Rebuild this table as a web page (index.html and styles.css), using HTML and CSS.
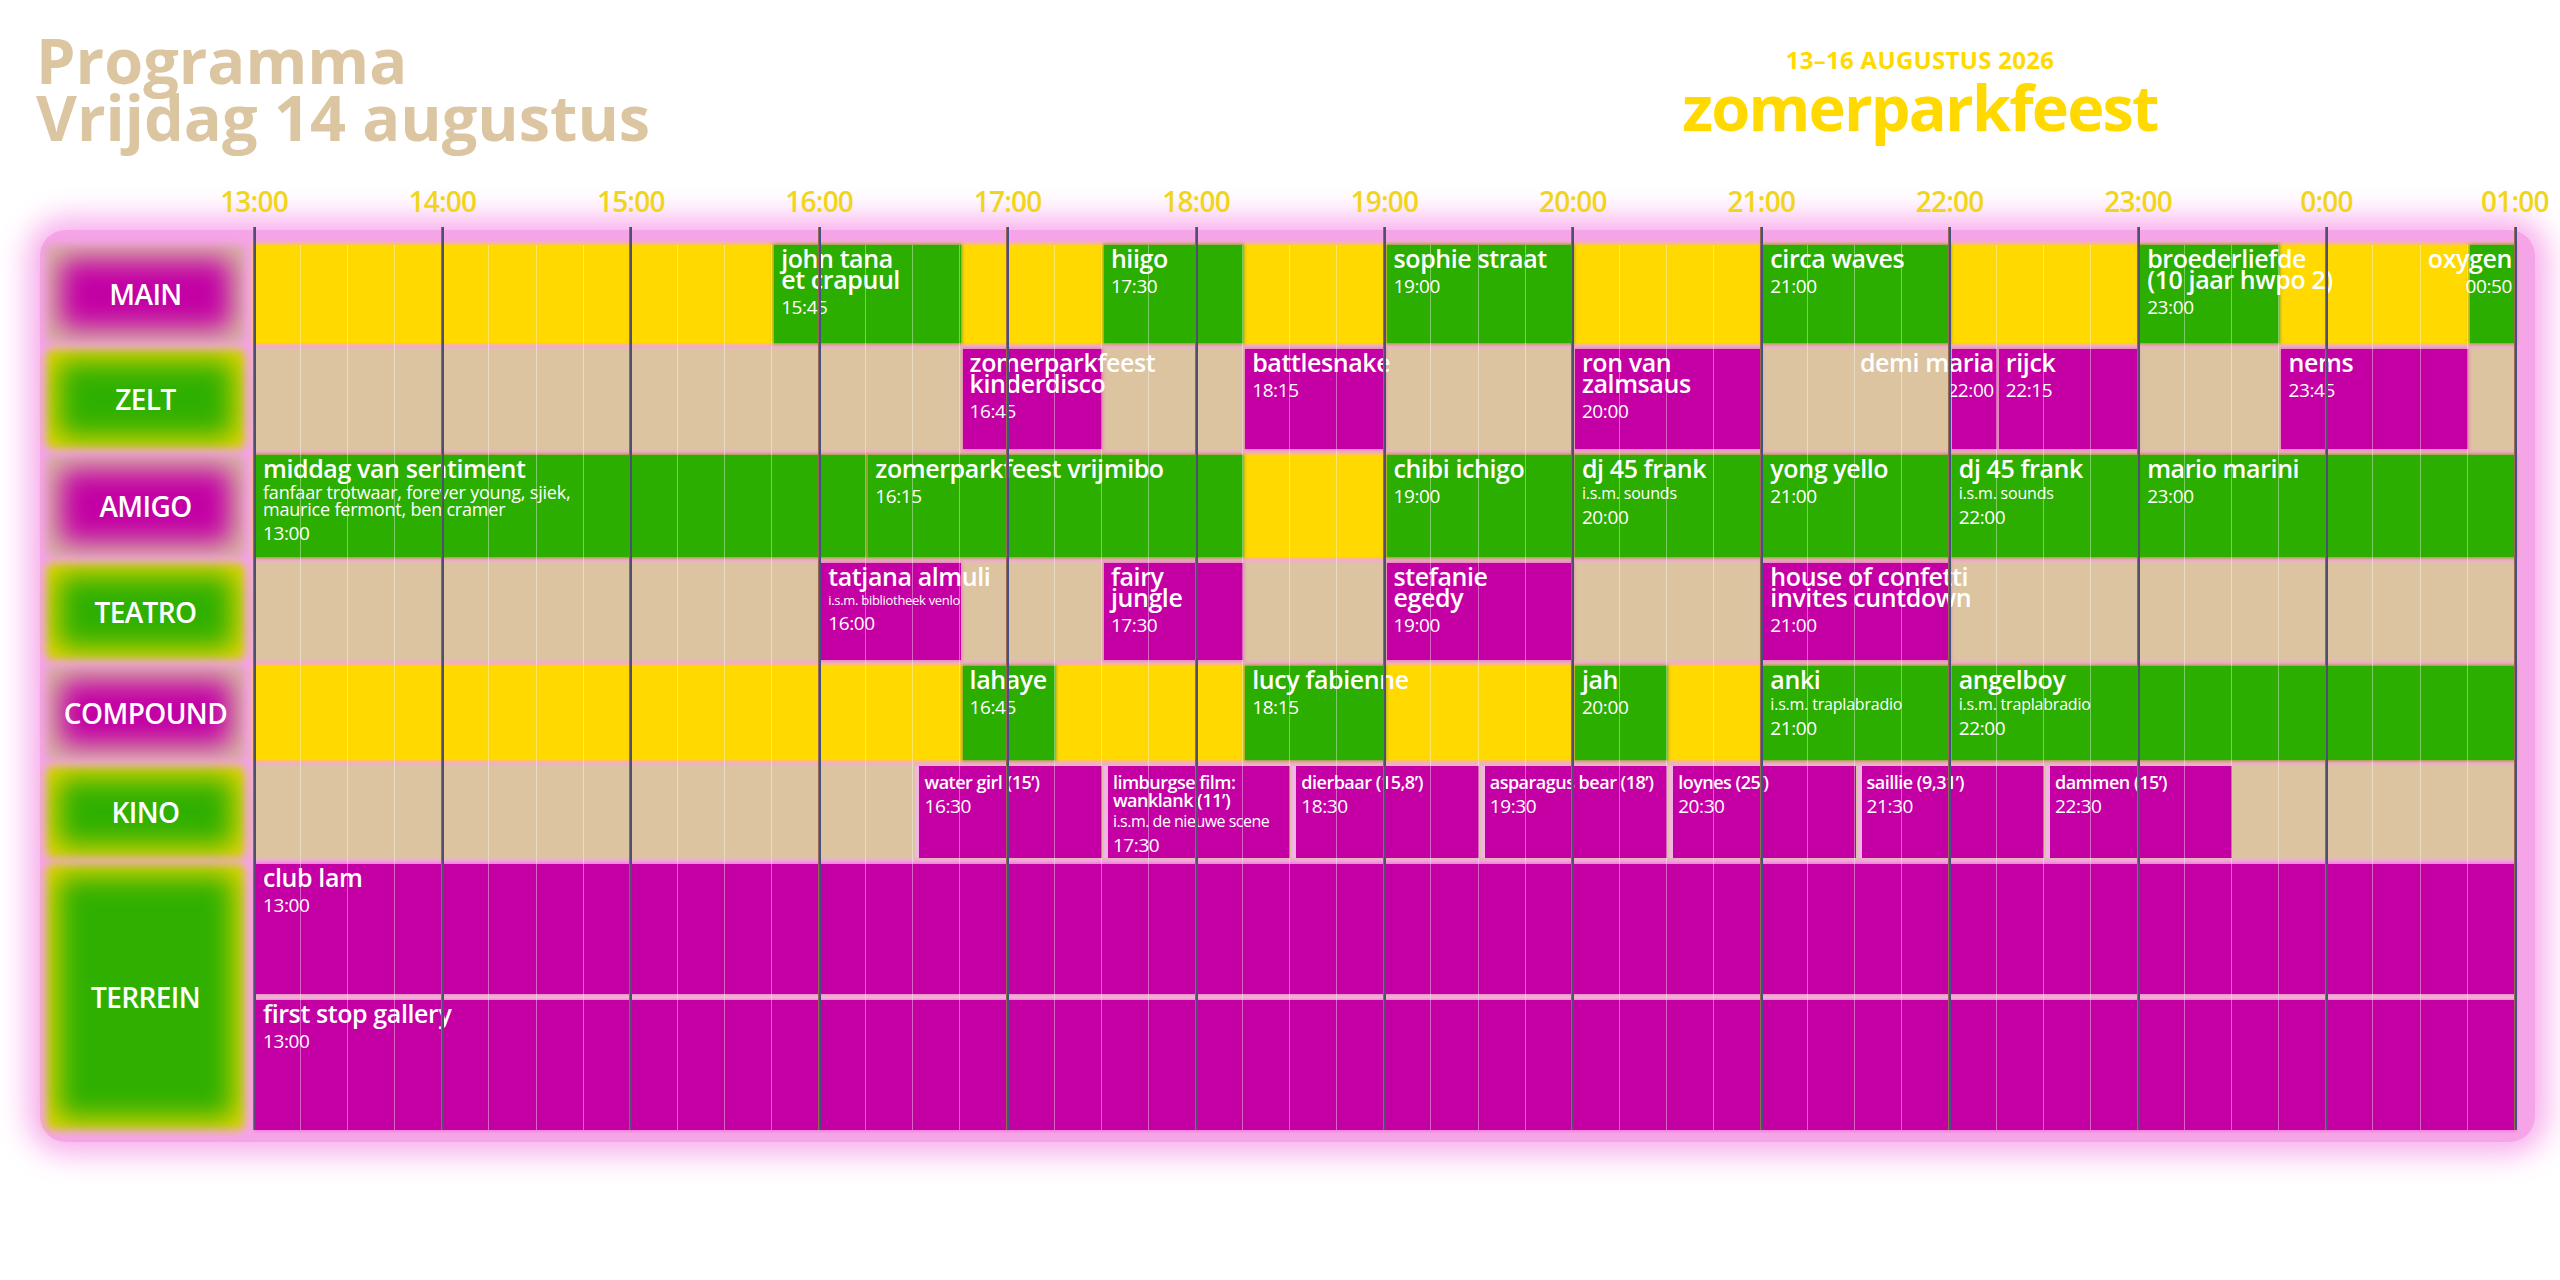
FILE: index.html
```html
<!DOCTYPE html>
<html lang="nl">
<head>
<meta charset="utf-8">
<title>Programma Vrijdag 14 augustus – zomerparkfeest</title>
<link rel="stylesheet" href="styles.css">
</head>
<body>
<div class="page">
  <header class="top">
    <h1 class="title">Programma<br>Vrijdag 14 augustus</h1>
    <div class="brand">
      <div class="dates">13–16 AUGUSTUS 2026</div>
      <div class="logo">zomerparkfeest</div>
    </div>
  </header>

  <div class="axis">
    <span>13:00</span><span>14:00</span><span>15:00</span><span>16:00</span><span>17:00</span><span>18:00</span><span>19:00</span><span>20:00</span><span>21:00</span><span>22:00</span><span>23:00</span><span>0:00</span><span>01:00</span>
  </div>

  <div class="board">
    <div class="rows">
      <div class="lines">
        <div class="hour"></div><div class="hour"></div><div class="hour"></div><div class="hour"></div>
        <div class="hour"></div><div class="hour"></div><div class="hour"></div><div class="hour"></div>
        <div class="hour"></div><div class="hour"></div><div class="hour"></div><div class="hour"></div>
      </div>

      <div class="row r-main">
        <div class="stage mag"><span>MAIN</span></div>
        <div class="track yellow">
          <div class="ev g" style="grid-column:12 / span 4"><div class="t">john tana<br>et crapuul</div><div class="time">15:45</div></div>
          <div class="ev g" style="grid-column:19 / span 3"><div class="t">hiigo</div><div class="time">17:30</div></div>
          <div class="ev g" style="grid-column:25 / span 4"><div class="t">sophie straat</div><div class="time">19:00</div></div>
          <div class="ev g" style="grid-column:33 / span 4"><div class="t">circa waves</div><div class="time">21:00</div></div>
          <div class="ev g" style="grid-column:41 / span 3"><div class="t">broederliefde<br>(10 jaar hwpo 2)</div><div class="time">23:00</div></div>
          <div class="ev g right" style="grid-column:48 / span 1"><div class="t">oxygen</div><div class="time">00:50</div></div>
        </div>
      </div>

      <div class="row r-zelt">
        <div class="stage grn"><span>ZELT</span></div>
        <div class="track beige">
          <div class="ev m" style="grid-column:16 / span 3"><div class="t">zomerparkfeest<br>kinderdisco</div><div class="time">16:45</div></div>
          <div class="ev m" style="grid-column:22 / span 3"><div class="t">battlesnake</div><div class="time">18:15</div></div>
          <div class="ev m" style="grid-column:29 / span 4"><div class="t">ron van<br>zalmsaus</div><div class="time">20:00</div></div>
          <div class="ev m right" style="grid-column:37 / span 1"><div class="t">demi maria</div><div class="time">22:00</div></div>
          <div class="ev m" style="grid-column:38 / span 3"><div class="t">rijck</div><div class="time">22:15</div></div>
          <div class="ev m" style="grid-column:44 / span 4"><div class="t">nems</div><div class="time">23:45</div></div>
        </div>
      </div>

      <div class="row r-amigo">
        <div class="stage mag"><span>AMIGO</span></div>
        <div class="track yellow">
          <div class="ev g" style="grid-column:1 / span 13"><div class="t">middag van sentiment</div><div class="sub big">fanfaar trotwaar, forever young, sjiek,<br>maurice fermont, ben cramer</div><div class="time">13:00</div></div>
          <div class="ev g" style="grid-column:14 / span 8"><div class="t">zomerparkfeest vrijmibo</div><div class="time">16:15</div></div>
          <div class="ev g" style="grid-column:25 / span 4"><div class="t">chibi ichigo</div><div class="time">19:00</div></div>
          <div class="ev g" style="grid-column:29 / span 4"><div class="t">dj 45 frank</div><div class="sub">i.s.m. sounds</div><div class="time">20:00</div></div>
          <div class="ev g" style="grid-column:33 / span 4"><div class="t">yong yello</div><div class="time">21:00</div></div>
          <div class="ev g" style="grid-column:37 / span 4"><div class="t">dj 45 frank</div><div class="sub">i.s.m. sounds</div><div class="time">22:00</div></div>
          <div class="ev g" style="grid-column:41 / span 8"><div class="t">mario marini</div><div class="time">23:00</div></div>
        </div>
      </div>

      <div class="row r-teatro">
        <div class="stage grn"><span>TEATRO</span></div>
        <div class="track beige">
          <div class="ev m" style="grid-column:13 / span 3"><div class="t">tatjana almuli</div><div class="sub small">i.s.m. bibliotheek venlo</div><div class="time">16:00</div></div>
          <div class="ev m" style="grid-column:19 / span 3"><div class="t">fairy<br>jungle</div><div class="time">17:30</div></div>
          <div class="ev m" style="grid-column:25 / span 4"><div class="t">stefanie<br>egedy</div><div class="time">19:00</div></div>
          <div class="ev m" style="grid-column:33 / span 4"><div class="t">house of confetti<br>invites cuntdown</div><div class="time">21:00</div></div>
        </div>
      </div>

      <div class="row r-compound">
        <div class="stage mag"><span>COMPOUND</span></div>
        <div class="track yellow">
          <div class="ev g" style="grid-column:16 / span 2"><div class="t">lahaye</div><div class="time">16:45</div></div>
          <div class="ev g" style="grid-column:22 / span 3"><div class="t">lucy fabienne</div><div class="time">18:15</div></div>
          <div class="ev g" style="grid-column:29 / span 2"><div class="t">jah</div><div class="time">20:00</div></div>
          <div class="ev g" style="grid-column:33 / span 4"><div class="t">anki</div><div class="sub">i.s.m. traplabradio</div><div class="time">21:00</div></div>
          <div class="ev g" style="grid-column:37 / span 12"><div class="t">angelboy</div><div class="sub">i.s.m. traplabradio</div><div class="time">22:00</div></div>
        </div>
      </div>

      <div class="row r-kino">
        <div class="stage grn"><span>KINO</span></div>
        <div class="track beige">
          <div class="ev m kino" style="grid-column:15 / span 4"><div class="t">water girl (15’)</div><div class="time">16:30</div></div>
          <div class="ev m kino" style="grid-column:19 / span 4"><div class="t">limburgse film:<br>wanklank (11’)</div><div class="sub">i.s.m. de nieuwe scene</div><div class="time">17:30</div></div>
          <div class="ev m kino" style="grid-column:23 / span 4"><div class="t">dierbaar (15,8’)</div><div class="time">18:30</div></div>
          <div class="ev m kino" style="grid-column:27 / span 4"><div class="t">asparagus bear (18’)</div><div class="time">19:30</div></div>
          <div class="ev m kino" style="grid-column:31 / span 4"><div class="t">loynes (25’)</div><div class="time">20:30</div></div>
          <div class="ev m kino" style="grid-column:35 / span 4"><div class="t">saillie (9,31’)</div><div class="time">21:30</div></div>
          <div class="ev m kino" style="grid-column:39 / span 4"><div class="t">dammen (15’)</div><div class="time">22:30</div></div>
        </div>
      </div>

      <div class="row r-terrein">
        <div class="stage grn"><span>TERREIN</span></div>
        <div class="track split">
          <div class="ev m" style="grid-column:1 / span 48; grid-row:1"><div class="t">club lam</div><div class="time">13:00</div></div>
          <div class="ev m" style="grid-column:1 / span 48; grid-row:2"><div class="t">first stop gallery</div><div class="time">13:00</div></div>
        </div>
      </div>
    </div>
  </div>
</div>
</body>
</html>
```

FILE: styles.css
```css
* { box-sizing: border-box; }

html, body {
  margin: 0;
  padding: 0;
  background: #ffffff;
}

body {
  font-family: "Open Sans", "Liberation Sans", sans-serif;
  color: #ffffff;
}

.page {
  width: 2560px;
  height: 1280px;
  overflow: hidden;
  position: relative;
}

/* ---------- header ---------- */
.top {
  height: 181px;
  display: flex;
  align-items: flex-start;
}

.title {
  margin: 0;
  width: 1280px;
  padding: 31px 0 0 36px;
  font-family: "Open Sans", "Liberation Sans", sans-serif;
  font-weight: 700;
  font-size: 63px;
  line-height: 57px;
  letter-spacing: 0;
  color: #dcc6a2;
}

.brand {
  width: 1280px;
  display: flex;
  flex-direction: column;
  align-items: center;
  padding-top: 46px;
  color: #ffd900;
}

.dates {
  font-weight: 700;
  font-size: 24px;
  line-height: 28px;
  letter-spacing: 0.3px;
}

.logo {
  font-weight: 700;
  font-size: 63px;
  line-height: 62px;
  letter-spacing: -1.8px;
  margin-top: 2px;
}

/* ---------- time axis ---------- */
.axis {
  height: 40px;
  margin-left: 159.8px;
  display: grid;
  grid-template-columns: repeat(13, 188.42px);
  align-items: center;
  color: #f1d51d;
  font-size: 28px;
  font-weight: 600;
  line-height: 40px;
  letter-spacing: -0.8px;
}

.axis span {
  text-align: center;
}

/* ---------- board ---------- */
.board {
  margin: 9px 0 0 40px;
  width: 2495px;
  padding: 15px 0 12px 6px;
  background: #f6a4e8;
  box-shadow: 0 0 30px 12px #f8acec;
  border-radius: 26px;
}

.rows {
  position: relative;
  display: flex;
  flex-direction: column;
  gap: 6px;
}

.row {
  display: flex;
  gap: 9px;
}

.r-main { height: 98px; }
.r-zelt { height: 100px; }
.r-amigo { height: 102px; }
.r-teatro { height: 97px; }
.r-compound { height: 94px; }
.r-kino { height: 92px; }
.r-terrein { height: 266px; }

/* stage labels */
.stage {
  width: 199px;
  flex: none;
  position: relative;
  display: flex;
  align-items: center;
  justify-content: center;
  font-size: 28px;
  font-weight: 600;
  letter-spacing: -0.6px;
  color: #ffffff;
}

.stage::before {
  content: "";
  position: absolute;
  inset: 0;
  border-radius: 8px;
  filter: blur(4px);
}

.stage.mag::before {
  background: #c300a4;
  box-shadow: inset 0 0 26px 14px #d8b7a4;
}

.stage.grn::before {
  background: #2fb000;
  box-shadow: inset 0 0 26px 12px #e2d500;
}

.stage span {
  position: relative;
}

/* tracks */
.track {
  width: 2261px;
  flex: none;
  display: grid;
  grid-template-columns: repeat(48, minmax(0, 1fr));
  grid-template-rows: 100%;
}

.track.yellow {
  background: #ffd900;
  box-shadow: 0 0 4px 1px #ffd900;
}

.track.beige {
  background: #dcc4a1;
  box-shadow: 0 0 4px 1px #dcc4a1;
}

.track.split {
  grid-template-rows: 1fr 1fr;
  row-gap: 6px;
  background: #f1c0d6;
}

/* events */
.ev {
  grid-row: 1;
  min-width: 0;
  margin-left: 2px;
  padding: 3px 7px;
  display: flex;
  flex-direction: column;
  align-items: flex-start;
  white-space: nowrap;
  position: relative;
}

.ev.g {
  background: #2bae00;
  box-shadow: 0 0 3px 1px rgba(30, 100, 110, 0.55);
}

.ev.m {
  background: #c400a4;
  box-shadow: 0 0 3px 1px rgba(236, 80, 200, 0.6);
}

.ev.right {
  align-items: flex-end;
  text-align: right;
  padding-right: 3px;
}

.t {
  font-size: 25px;
  font-weight: 600;
  line-height: 21px;
  letter-spacing: -0.4px;
}

.sub {
  margin-top: 6px;
  font-size: 16px;
  font-weight: 500;
  line-height: 17px;
  letter-spacing: -0.2px;
}

.sub.big {
  font-size: 18px;
  line-height: 17px;
  margin-top: 5px;
}

.sub.small {
  font-size: 13px;
  line-height: 15px;
  letter-spacing: -0.3px;
}

.time {
  margin-top: 8px;
  font-size: 19px;
  font-weight: 500;
  line-height: 19px;
  letter-spacing: -0.4px;
}

.sub + .time {
  margin-top: 6px;
}

.ev.kino {
  padding-top: 7px;
  padding-left: 9px;
  box-shadow: inset 4px 0 0 #f2b4e2;
}

.ev.kino .t {
  font-size: 18px;
  line-height: 18px;
  letter-spacing: -0.5px;
}

.ev.kino .sub {
  margin-top: 4px;
  font-size: 16px;
  letter-spacing: -0.5px;
}

.ev.kino .time {
  margin-top: 6px;
}

/* hour and quarter lines (overlay) */
.lines {
  position: absolute;
  top: -18px;
  bottom: 0;
  left: 208px;
  width: 2261px;
  display: grid;
  grid-template-columns: repeat(12, 1fr);
  z-index: 5;
  pointer-events: none;
}

.lines::after {
  content: "";
  position: absolute;
  top: 18px;
  bottom: 0;
  left: 0;
  right: 0;
  background: repeating-linear-gradient(90deg,
    transparent 0, transparent 46.1px,
    rgba(255, 255, 255, 0.38) 46.1px, rgba(255, 255, 255, 0.38) 47.1px);
}

.hour {
  position: relative;
}

.hour::before,
.hour:last-child::after {
  content: "";
  position: absolute;
  top: 0;
  bottom: 0;
  left: -1.5px;
  width: 3px;
  background: linear-gradient(90deg, #c8793e 0, #55506a 40%, #3c4f90 100%);
  z-index: 1;
}

.hour:last-child::after {
  left: auto;
  right: -1.5px;
}
```
